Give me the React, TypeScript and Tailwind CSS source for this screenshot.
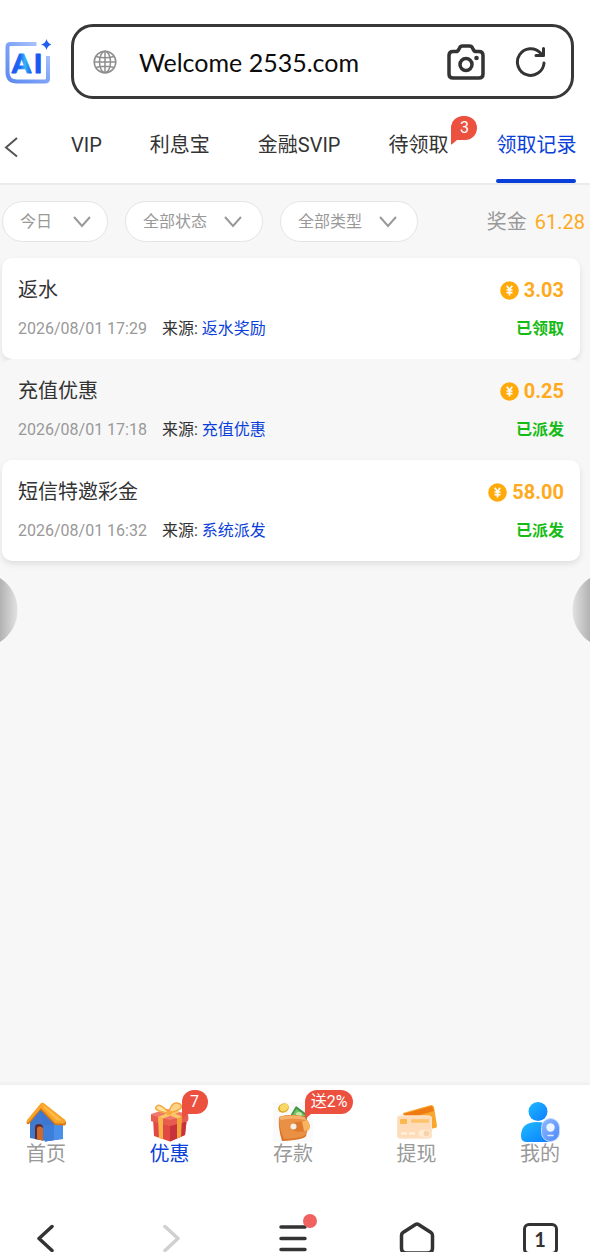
import { ReactNode } from 'react';
import clsx from 'clsx';

type RewardRecord = {
  title: string;
  time: string;
  source: string;
  amount: string;
  status: string;
};

const TABS = [
  { name: 'VIP' },
  { name: '利息宝' },
  { name: '金融SVIP' },
  { name: '待领取', badge: '3' },
  { name: '领取记录', active: true },
];

const FILTERS = [
  { id: 'date', label: '日期', value: '今日', width: 'w-[106px]', arrow: 'right-4' },
  { id: 'status', label: '状态', value: '全部状态', width: 'w-[138px]', arrow: 'right-5' },
  { id: 'type', label: '类型', value: '全部类型', width: 'w-[138px]', arrow: 'right-5' },
];

const RECORDS: RewardRecord[] = [
  {
    title: '返水',
    time: '2026/08/01 17:29',
    source: '返水奖励',
    amount: '3.03',
    status: '已领取',
  },
  {
    title: '充值优惠',
    time: '2026/08/01 17:18',
    source: '充值优惠',
    amount: '0.25',
    status: '已派发',
  },
  {
    title: '短信特邀彩金',
    time: '2026/08/01 16:32',
    source: '系统派发',
    amount: '58.00',
    status: '已派发',
  },
];

const Badge = ({ text, className }: { text: string; className: string }) => (
  <span
    className={clsx(
      'absolute flex h-6 items-center justify-center rounded-xl rounded-bl-none bg-[#ec503f] text-base leading-6 text-white',
      className,
    )}
  >
    {text}
    <svg className="absolute top-5 left-0" width="12" height="9" viewBox="0 0 12 9">
      <path d="M0 0h12v4H6L1 8.300Q0 9 0 8Z" fill="#ec503f" />
    </svg>
  </span>
);

const AiLogo = () => (
  <svg width="46" height="46" viewBox="0 0 46 46" aria-hidden="true">
    <defs>
      <linearGradient id="frame" x1="0" y1="1" x2="1" y2="0">
        <stop offset="0" stopColor="#5d8bf0" />
        <stop offset="0.500" stopColor="#7ea3f6" />
        <stop offset="1" stopColor="#b9cdfb" />
      </linearGradient>
      <linearGradient id="letters" x1="0" y1="0" x2="1" y2="0">
        <stop offset="0" stopColor="#1a55ee" />
        <stop offset="0.300" stopColor="#1d6bf5" />
        <stop offset="0.450" stopColor="#35b6f5" />
        <stop offset="0.650" stopColor="#1a5cf5" />
        <stop offset="1" stopColor="#1a55ee" />
      </linearGradient>
    </defs>
    <path
      d="M31.500 5H5.500Q2.500 5 2.500 8V33Q2.500 42.500 12 42.500H40Q43 42.500 43 39.500V17"
      fill="none"
      stroke="url(#frame)"
      strokeWidth="4"
    />
    <text
      x="7 29"
      y="34"
      fontFamily="Lato, sans-serif"
      fontWeight="900"
      fontSize="27"
      fill="url(#letters)"
      stroke="url(#letters)"
      strokeLinejoin="round"
    >
      AI
    </text>
    <path d="M41.500 0Q42.500 4.500 47 5.500Q42.500 6.500 41.500 11Q40.500 6.500 36 5.500Q40.500 4.500 41.500 0Z" fill="#1f62f0" />
  </svg>
);

const GlobeIcon = () => (
  <svg width="24" height="24" viewBox="0 0 24 24" fill="none" stroke="#8e8e8e" strokeWidth="1.500" aria-hidden="true">
    <circle cx="12" cy="12" r="10.800" />
    <ellipse cx="12" cy="12" rx="5.500" ry="10.800" />
    <path d="M1 12h22M3 6.500Q12 9 21 6.500M3 17.500Q12 15 21 17.500M12 1v22" />
  </svg>
);

const CameraIcon = () => (
  <svg width="38" height="36" viewBox="0 0 38 36" fill="none" stroke="#333" strokeWidth="3.500" strokeLinejoin="round">
    <path d="M6 7.500H9Q11 7.500 12 5L12.500 4Q13.300 2 15.500 2H22.500Q24.700 2 25.500 4L26 5Q27 7.500 29 7.500H32Q36 7.500 36 11.500V30Q36 34 32 34H6Q2 34 2 30V11.500Q2 7.500 6 7.500Z" />
    <circle cx="19" cy="20.500" r="6" />
    <circle cx="29.500" cy="14" r="2.300" fill="#333" stroke="none" />
  </svg>
);

const ReloadIcon = () => (
  <svg width="32" height="32" viewBox="0 0 32 32" fill="none" stroke="#333" strokeWidth="3" strokeLinecap="round">
    <path d="M29 17A13.300 13.300 0 1 1 25.500 7L28 9.500" />
    <path d="M28.500 2.500V9.500H21" strokeLinejoin="round" />
  </svg>
);

const CoinIcon = () => (
  <svg width="19" height="19" viewBox="0 0 19 19" aria-hidden="true">
    <circle cx="9.500" cy="9.500" r="9.300" fill="#ffaa09" />
    <path
      d="M6.700 4.800L9.500 8.300L12.300 4.800M9.500 8.300V14.500M6.500 9H12.500M6.500 11.600H12.500"
      fill="none"
      stroke="#fff"
      strokeWidth="1.700"
    />
  </svg>
);

const HomeArt = () => (
  <svg width="40" height="40" viewBox="0 0 40 40">
    <path d="M4 19L14 7L20 18V39L4 36Z" fill="#4179cf" />
    <path d="M14 7L37 21V37L19 39.500L17 20Z" fill="#3d77d2" />
    <path d="M18 23H37V36.500L19 39.500Z" fill="#4a90ea" />
    <path d="M18 23L28 23V38L19 39.500Z" fill="#3d7edb" />
    <path d="M9 37V25Q9 22 13 22Q17 22 17 26V38.500Z" fill="#5c2b32" />
    <path d="M11 37.500V26Q12 24 14 24.500Q17 25 17 27V38.500Z" fill="#cf6a2b" />
    <path d="M15 2Q17 1 19 3L39 18Q41 21 39 23.500L29 23L14.500 8L3 22Q0.500 23 0.500 20Z" fill="#d9790f" />
    <path d="M15 1Q17 0 19 2L38.500 17.500Q40.500 20 38 21.500L29.500 21.500L15 6L2.500 20.500Q0 21 1 18Z" fill="#f9a42a" />
    <path d="M18 3.500L36 18.500L31 18.500L17 5Z" fill="#ffba48" />
  </svg>
);

const GiftArt = () => (
  <svg width="40" height="40" viewBox="0 0 40 40">
    <path d="M3 16L20 21L37 15L35 33L20 39.500L4 34Z" fill="#e04a43" />
    <path d="M20 20L37 15L35 33L20 39.500Z" fill="#c9323a" />
    <path d="M1 12L17 7L38 12Q39 16 38 19L20 23.500L1 19Z" fill="#f0796a" />
    <path d="M1 13L20 18L38 13V19L20 24L1 19Z" fill="#e85c50" />
    <path d="M8 15L13 16.500V37.500L9 36Z" fill="#f7b64b" />
    <path d="M27 16L32 14.500L31 34.500L27 36.500Z" fill="#f2a43c" />
    <path d="M8 15L25 8L30 10L13 16.500ZM10 9L16 8L32 14.500L27 16.500Z" fill="#fbc667" />
    <path d="M18 10Q9 0 6 5Q4 9 18 11Z" fill="#fde2a0" stroke="#f3ac43" strokeWidth="1.500" />
    <path d="M19 10Q22 -2 30 2Q36 7 19 11Z" fill="#fcd387" stroke="#f3a53d" strokeWidth="1.500" />
    <path d="M16 10L22 9L21 13L17 13Z" fill="#f6a83a" />
  </svg>
);

const WalletArt = () => (
  <svg width="40" height="40" viewBox="0 0 40 40">
    <path d="M0 0H40V40H0Z" fill="#fafafa" />
    <path d="M17 14L23 4L35 13L32 22Z" fill="#3f9747" />
    <path d="M19 14L23.500 7L33 14Z" fill="#78c36a" />
    <ellipse cx="26" cy="12" rx="3" ry="2" fill="#c8e6a6" />
    <ellipse cx="10.500" cy="6" rx="5.500" ry="4.500" transform="rotate(-25 10.500 6)" fill="#dca31f" />
    <ellipse cx="11" cy="5.500" rx="4.500" ry="3.500" transform="rotate(-25 11 5.500)" fill="#f8d865" />
    <path d="M6 15Q17 11 33 15Q36 25 33 34Q31 38 9 39Q5 26 6 15Z" fill="#d9752a" />
    <path d="M6 15Q18 11 32 15L33 18Q36 28 32 33Q30 36 11 37Q6 26 6 15Z" fill="#ea9045" />
    <path d="M6 15Q18 12 32 15L33 18Q19 15 8 18Z" fill="#f6b26b" />
    <path d="M18 24Q19 20 25 20L34 18Q38 22 36 28Q28 31 22 29Q18 28 18 24Z" fill="#dd7a2c" />
    <path d="M29 19.500L34 18Q38 22 36 28L31 29Z" fill="#f8b45f" />
    <circle cx="20.500" cy="24.500" r="3" fill="#f3eee7" />
  </svg>
);

const CardsArt = () => (
  <svg width="40" height="40" viewBox="0 0 40 40">
    <path d="M6 11L34 3Q36 3 37 5L40 24Q40 26 38 26L12 31Z" fill="#f8a62c" />
    <path d="M6 12L35 4L37 9L12 16Z" fill="#f07b13" />
    <rect x="0" y="13.500" width="35" height="23" rx="3" fill="#ffdcb9" />
    <rect x="0.500" y="14" width="34" height="22" rx="3" fill="none" stroke="#fae5cc" />
    <rect x="3" y="17" width="7" height="5" rx="1" fill="#fbb74c" />
    <path d="M14 19H32" stroke="#fcc36a" strokeWidth="3.500" />
    <path d="M4 31.500H10M12 31.500H18" stroke="#fff4e4" strokeWidth="2" />
    <circle cx="25" cy="31.500" r="3.500" fill="#ffebce" />
    <circle cx="29.500" cy="31.500" r="3.500" fill="#f7d2a7" stroke="#fff0df" />
  </svg>
);

const UserArt = () => (
  <svg width="40" height="40" viewBox="0 0 40 40">
    <defs>
      <linearGradient id="user" x1="0" y1="0" x2="1" y2="1">
        <stop offset="0" stopColor="#1ebaff" />
        <stop offset="1" stopColor="#0c7cff" />
      </linearGradient>
      <linearGradient id="pill" x1="0" y1="0" x2="1" y2="1">
        <stop offset="0" stopColor="#8fbcff" />
        <stop offset="1" stopColor="#4c86fa" />
      </linearGradient>
    </defs>
    <circle cx="18" cy="9.500" r="9.500" fill="url(#user)" />
    <path d="M1 34Q1 20 17 20Q33 20 33 34Q33 40 27 40H7Q1 40 1 34Z" fill="url(#user)" />
    <rect x="21.500" y="16.500" width="18" height="23" rx="9" fill="url(#pill)" stroke="#c3dbff" />
    <circle cx="30.500" cy="25.500" r="4.200" fill="#eef7ff" />
    <path d="M28 33.500H33" stroke="#dcecff" strokeWidth="1.500" strokeLinecap="round" />
  </svg>
);

const NAV_ITEMS: {
  name: string;
  art: ReactNode;
  badge?: string;
  badgeClass?: string;
  active?: boolean;
}[] = [
  { name: '首页', art: <HomeArt /> },
  { name: '优惠', art: <GiftArt />, badge: '7', badgeClass: 'w-[26px]', active: true },
  { name: '存款', art: <WalletArt />, badge: '送2%', badgeClass: 'w-12' },
  { name: '提现', art: <CardsArt /> },
  { name: '我的', art: <UserArt /> },
];

const AddressBar = () => (
  <header className="flex items-center bg-white pt-6 pr-4 pb-2 pl-[5px]">
    <button type="button" aria-label="AI" className="shrink-0">
      <AiLogo />
    </button>
    <div className="ml-5 flex h-[75px] min-w-0 flex-1 items-center rounded-[22px] border-3 border-[#383838] pr-6 pl-[19px]">
      <GlobeIcon />
      <input
        aria-label="地址"
        defaultValue="Welcome 2535.com"
        className="ml-[22px] min-w-0 flex-1 bg-transparent pt-0.5 font-[Lato,sans-serif] text-[25px] text-[#0c0c0c] outline-none"
      />
      <button type="button" aria-label="拍照">
        <CameraIcon />
      </button>
      <button type="button" aria-label="刷新" className="ml-[30px]">
        <ReloadIcon />
      </button>
    </div>
  </header>
);

const TabBar = () => (
  <nav className="flex border-b-2 border-[#ebebeb] bg-white pl-1">
    <button type="button" aria-label="返回" className="w-[67px] pt-1">
      <svg width="16" height="22" viewBox="0 0 16 22" fill="none" stroke="#555" strokeWidth="2">
        <path d="M13 2L2 11.500L13 20.500" />
      </svg>
    </button>
    <div className="flex flex-1 gap-12">
      {TABS.map((tab) => (
        <a
          key={tab.name}
          href="#"
          className={clsx(
            'relative flex h-[76px] items-center text-xl whitespace-nowrap',
            tab.active ? 'text-[#0b3fd9]' : 'text-[#333]',
          )}
        >
          {tab.name}
          {tab.badge && <Badge text={tab.badge} className="top-[9px] left-full ml-[3px] w-[26px]" />}
          {tab.active && (
            <span className="absolute inset-x-0 bottom-0 h-1 rounded-full bg-[#0b3fd9]" />
          )}
        </a>
      ))}
    </div>
  </nav>
);

const FilterBar = () => (
  <div className="flex items-center gap-[17px] pt-4 pr-[5px] pb-4 pl-0.5">
    {FILTERS.map((filter) => (
      <div key={filter.id} className={clsx('relative', filter.width)}>
        <select
          id={filter.id}
          aria-label={filter.label}
          className="h-[41px] w-full appearance-none rounded-full border border-[#e4e4e4] bg-white pl-[17px] text-base text-[#999] outline-none"
        >
          <option>{filter.value}</option>
        </select>
        <svg
          className={clsx('pointer-events-none absolute top-3.5 w-5', filter.arrow)}
          height="14"
          viewBox="0 0 20 14"
          fill="none"
          stroke="#999"
          strokeWidth="2"
        >
          <path d="M2 2L10 11L18 2" />
        </svg>
      </div>
    ))}
    <p className="ml-auto flex gap-2 text-xl">
      <span className="text-[#999]">奖金</span>
      <span className="text-[#ffaa1c]">61.28</span>
    </p>
  </div>
);

const RecordCard = ({ record, plain }: { record: RewardRecord; plain: boolean }) => (
  <li
    className={clsx(
      'relative flex flex-col gap-[13px] rounded-[10px] px-4 py-[18px]',
      plain ? 'bg-[#f7f7f7]' : 'bg-white shadow-[0_3px_6px_rgba(0,0,0,0.1)]',
    )}
  >
    <div className="flex items-center justify-between text-xl leading-7">
      <h2 className="text-[#333]">{record.title}</h2>
      <p className="flex items-center gap-[5px] font-bold text-[#ffaa1c]">
        <CoinIcon />
        {record.amount}
      </p>
    </div>
    <div className="flex items-center text-base leading-6">
      <time className="w-36 text-[#999]">{record.time}</time>
      <p className="text-[#333]">
        来源: <span className="text-[#0b3fd9]">{record.source}</span>
      </p>
      <p className="ml-auto font-bold text-[#16bb16]">{record.status}</p>
    </div>
  </li>
);

const BottomBar = () => (
  <footer className="relative h-[167px] shrink-0 overflow-hidden bg-white">
    <nav className="flex justify-between pt-[17px] pr-[30px] pl-[26px]">
      {NAV_ITEMS.map((item) => (
        <a
          key={item.name}
          href="#"
          className={clsx(
            'relative w-10 text-xl leading-6',
            item.active ? 'text-[#0b3fd9]' : 'text-[#999]',
          )}
        >
          {item.art}
          {item.name}
          {item.badge && (
            <Badge
              text={item.badge}
              className={clsx('-top-3 left-8 whitespace-nowrap', item.badgeClass)}
            />
          )}
        </a>
      ))}
    </nav>
    <div className="flex justify-between pt-[54px] pr-[30px] pl-[26px]">
      <button type="button" aria-label="后退" className="flex w-10 justify-center">
        <svg width="36" height="36" viewBox="0 0 36 36" fill="none" stroke="#333" strokeWidth="3.500" strokeLinecap="round" strokeLinejoin="round">
          <path d="M24 6.500L11 18.500L24 30.500" />
        </svg>
      </button>
      <button type="button" aria-label="前进" className="flex w-10 justify-center">
        <svg width="36" height="36" viewBox="0 0 36 36" fill="none" stroke="#d0d0d0" strokeWidth="3.500" strokeLinecap="round" strokeLinejoin="round">
          <path d="M13 6.500L26 18.500L13 30.500" />
        </svg>
      </button>
      <button type="button" aria-label="菜单" className="relative flex w-10 justify-center">
        <svg width="36" height="36" viewBox="0 0 36 36" fill="none" stroke="#333" strokeWidth="3.500" strokeLinecap="round">
          <path d="M6 7H30M6 18.500H30M6 29.500H30" />
        </svg>
        <span className="absolute -top-1.5 left-[30px] size-3.5 rounded-full bg-[#f0625f]" />
      </button>
      <button type="button" aria-label="主页" className="flex w-10 justify-center">
        <svg width="36" height="36" viewBox="0 0 36 36" fill="none" stroke="#333" strokeWidth="3.500" strokeLinejoin="round">
          <path d="M16.500 4.500Q18 3.500 19.500 4.500L32 12.500Q33.500 13.500 33.500 15.500V28Q33.500 33 28.500 33H7.500Q2.500 33 2.500 28V15.500Q2.500 13.500 4 12.500Z" />
        </svg>
      </button>
      <button type="button" aria-label="标签页" className="flex w-10 items-start justify-center pt-[3px]">
        <span className="flex h-8 w-[35px] items-center justify-center rounded-md border-3 border-[#333] font-[Lato,sans-serif] text-xl leading-5 font-bold text-[#333]">
          1
        </span>
      </button>
    </div>
  </footer>
);

const SideHandle = ({ side }: { side: 'left' | 'right' }) => (
  <svg
    className={clsx('fixed top-[577px]', side === 'left' ? 'left-0' : 'right-0 -scale-x-100')}
    width="18"
    height="66"
    viewBox="0 0 18 66"
    aria-hidden="true"
  >
    <defs>
      <linearGradient id={`handle-${side}`}>
        <stop offset="0" stopColor="#b2b2b2" />
        <stop offset="1" stopColor="#e2e2e2" />
      </linearGradient>
    </defs>
    <path d="M0 1A38 38 0 0 1 0 65Z" fill={`url(#handle-${side})`} />
  </svg>
);

const App = () => {
  return (
    <div className="flex h-screen flex-col overflow-hidden bg-[#f7f7f7] font-[Roboto,'Noto_Sans_CJK_SC',sans-serif]">
      <AddressBar />
      <TabBar />
      <main className="flex-1">
        <FilterBar />
        <ul className="pr-2.5 pl-0.5">
          {RECORDS.map((record, index) => (
            <RecordCard key={record.time} record={record} plain={index % 2 === 1} />
          ))}
        </ul>
      </main>
      <div className="h-1 shrink-0 bg-linear-to-b from-[#f7f7f7] to-[#eeeeee]" />
      <BottomBar />
      <SideHandle side="left" />
      <SideHandle side="right" />
    </div>
  );
};

export default App;
